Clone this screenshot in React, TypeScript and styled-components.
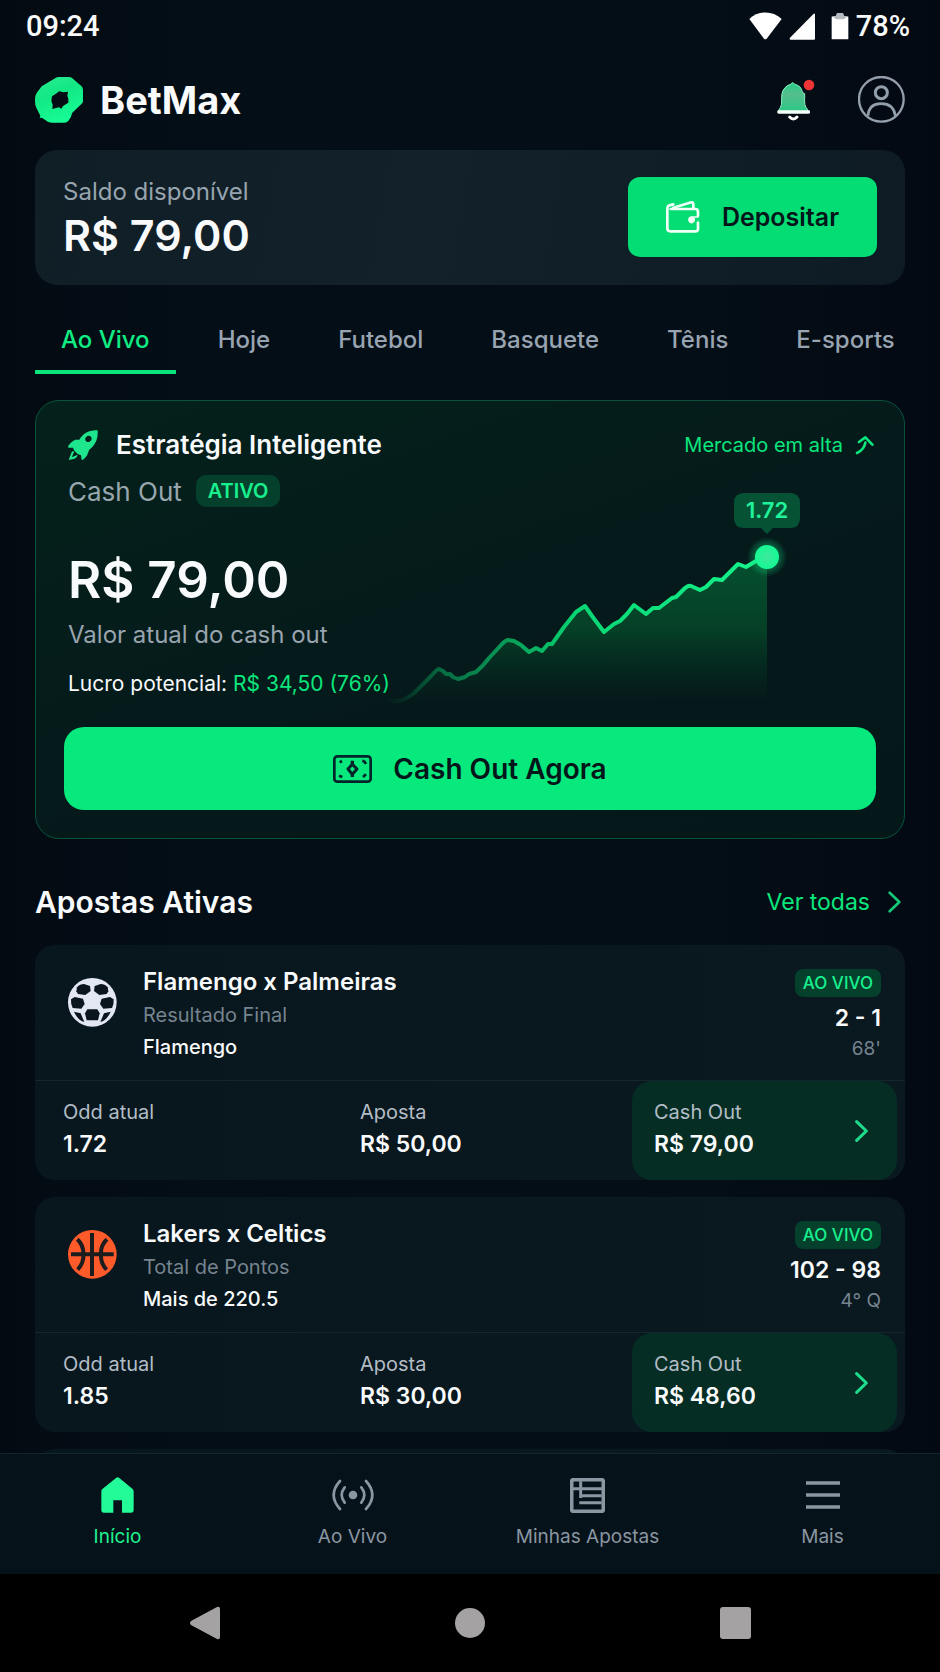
import React from 'react';
import styled, { createGlobalStyle } from 'styled-components';

const GlobalStyle = createGlobalStyle`
  *, *::before, *::after { box-sizing: border-box; }
  body {
    margin: 0;
    background: #000;
    font-family: Inter, "Liberation Sans", sans-serif;
    color: #f8fafb;
  }
  h1, h2, h3, p, dl, dd, dt, ul { margin: 0; padding: 0; font-weight: inherit; }
  button { font: inherit; color: inherit; border: 0; padding: 0; background: none; cursor: pointer; }
  a { color: inherit; text-decoration: none; }
  svg { display: block; flex: none; }
`;

const Shell = styled.div`
  display: flex;
  flex-direction: column;
  height: 100vh;
  background: linear-gradient(90deg, #030a12 0%, #040e16 20%, #040e16 75%, #030912 100%);
`;

const StatusBar = styled.div`
  display: flex;
  flex: none;
  align-items: center;
  justify-content: space-between;
  height: 52px;
  padding: 0 30px 0 26px;
  font-family: Roboto, sans-serif;
  font-size: 29px;
  font-weight: 500;
  line-height: 34px;
`;

const StatusIcons = styled.div`
  display: flex;
  align-items: center;
  gap: 15px;
`;

const StatusGroup = styled.div`
  display: flex;
  align-items: center;
  gap: 7px;
`;

const Scroller = styled.main`
  flex: 1;
  min-height: 0;
  overflow-y: auto;
  scrollbar-width: none;
  padding: 0 35px;
`;

const Header = styled.header`
  display: flex;
  align-items: center;
  justify-content: space-between;
  padding: 24px 0 27px;
`;

const Brand = styled.div`
  display: flex;
  align-items: center;
  gap: 17px;
  height: 46px;
`;

const BrandName = styled.h1`
  font-size: 38px;
  font-weight: 700;
  line-height: 46px;
`;

const HeaderActions = styled.div`
  display: flex;
  align-items: center;
  gap: 43px;
`;

const BalanceCard = styled.section`
  display: flex;
  align-items: center;
  justify-content: space-between;
  padding: 27px 28px 28px;
  border-radius: 22px;
  background: linear-gradient(100deg, #101e26, #12212a 45%, #0e1b24);
`;

const BalanceText = styled.div`
  display: flex;
  flex-direction: column;
  gap: 6px;
`;

const Muted = styled.p`
  font-size: 24px;
  line-height: 30px;
  color: #98a4ae;
`;

const BalanceValue = styled.p`
  font-size: 43px;
  font-weight: 600;
  line-height: 44px;
`;

const DepositButton = styled.button`
  display: flex;
  align-items: center;
  justify-content: center;
  gap: 22px;
  width: 249px;
  height: 80px;
  border-radius: 12px;
  background: #04dd73;
  color: #03161a;
  font-size: 25px;
  font-weight: 600;
`;

const Tabs = styled.nav`
  display: flex;
  gap: 16px;
  margin: 40px -35px 26px 0;
  overflow: hidden;
`;

const Tab = styled.button<{ $active?: boolean }>`
  padding: 0 26px 15px;
  border-bottom: 4px solid ${p => (p.$active ? '#0be47b' : 'transparent')};
  color: ${p => (p.$active ? '#10ec84' : '#98a4b1')};
  font-size: 24px;
  font-weight: 500;
  line-height: 30px;
  white-space: nowrap;
`;

const StrategyCard = styled.section`
  padding: 27px 28px 28px;
  border: 1px solid #08543a;
  border-radius: 24px;
  background: linear-gradient(160deg, #04211b 0%, #05191b 60%, #041819 100%);
`;

const StrategyHead = styled.div`
  display: flex;
  align-items: center;
  justify-content: space-between;
  padding: 0 2px 0 4px;
`;

const StrategyTitle = styled.div`
  display: flex;
  align-items: center;
  gap: 17px;
`;

const TitleText = styled.h2`
  font-size: 26px;
  font-weight: 600;
  line-height: 34px;
`;

const Trend = styled.div`
  display: flex;
  align-items: center;
  gap: 12px;
  color: #0be67d;
  font-size: 20px;
  line-height: 28px;
`;

const StrategyBody = styled.div`
  display: flex;
  padding: 8px 0 17px 4px;
`;

const StrategyInfo = styled.div`
  flex: none;
  width: 317px;
  white-space: nowrap;
`;

const CashOutLine = styled.div`
  display: flex;
  align-items: center;
  gap: 14px;
  height: 42px;
  color: #98a6ad;
  font-size: 26px;
`;

const Badge = styled.span<{ $small?: boolean }>`
  padding: ${p => (p.$small ? '0 8px' : '0 12px')};
  border-radius: ${p => (p.$small ? '8px' : '10px')};
  background: #05402d;
  color: #18f08d;
  font-size: ${p => (p.$small ? '17px' : '20px')};
  font-weight: ${p => (p.$small ? 500 : 600)};
  line-height: ${p => (p.$small ? '28px' : '32px')};
`;

const CashOutValue = styled.p`
  margin: 36px 0 8px;
  font-size: 51px;
  font-weight: 600;
  line-height: 64px;
`;

const Profit = styled.p`
  margin-top: 20px;
  font-size: 21px;
  line-height: 28px;
`;

const ProfitValue = styled.span`
  color: #0be67d;
`;

const Chart = styled.svg`
  flex: 1;
  min-width: 0;
  height: 240px;
`;

const CashOutButton = styled.button`
  display: flex;
  align-items: center;
  justify-content: center;
  gap: 21px;
  width: 100%;
  height: 83px;
  border-radius: 20px;
  background: #07e97c;
  color: #03161a;
  font-size: 28px;
  font-weight: 600;
`;

const SectionHead = styled.div`
  display: flex;
  align-items: center;
  justify-content: space-between;
  margin: 44px 0 24px;
`;

const SectionTitle = styled.h2`
  font-size: 30px;
  font-weight: 600;
  line-height: 38px;
`;

const SeeAll = styled.a`
  display: flex;
  align-items: center;
  gap: 18px;
  padding-right: 3px;
  color: #0be67d;
  font-size: 23px;
  line-height: 38px;
`;

const BetList = styled.ul`
  display: flex;
  flex-direction: column;
  gap: 17px;
  list-style: none;
`;

const BetCard = styled.li`
  overflow: hidden;
  border-radius: 20px;
  background: linear-gradient(90deg, #08161d, #0a1820);
`;

const NextCard = styled(BetCard)`
  height: 40px;
`;

const BetTop = styled.div`
  display: flex;
  padding: 20px 24px 17px 33px;
  border-bottom: 1px solid #16262e;
`;

const BallSlot = styled.div`
  padding: 13px 26px 0 0;
`;

const BetNames = styled.div`
  flex: 1;
`;

const BetTitle = styled.h3`
  font-size: 24px;
  font-weight: 600;
  line-height: 34px;
`;

const BetLine = styled.p<{ $dim?: boolean }>`
  color: ${p => (p.$dim ? '#76848f' : '#f8fafb')};
  font-size: 20px;
  font-weight: ${p => (p.$dim ? 400 : 500)};
  line-height: 32px;
`;

const BetStatus = styled.div`
  display: flex;
  flex-direction: column;
  align-items: flex-end;
`;

const BadgeRow = styled.div`
  display: flex;
  align-items: center;
  height: 36px;
`;

const Score = styled.p`
  font-size: 23px;
  font-weight: 600;
  line-height: 34px;
`;

const Clock = styled.p`
  color: #76848f;
  font-size: 19px;
  line-height: 28px;
`;

const BetBottom = styled.div`
  display: grid;
  grid-template-columns: 297fr 272fr 265fr;
  padding: 0 8px 0 28px;
`;

const Stat = styled.dl`
  padding: 15px 0 20px;
`;

const StatLabel = styled.dt`
  color: #b3bdc6;
  font-size: 20px;
  line-height: 32px;
`;

const StatValue = styled.dd`
  font-size: 23px;
  font-weight: 600;
  line-height: 32px;
`;

const BetCashOut = styled.button`
  display: flex;
  align-items: center;
  justify-content: space-between;
  padding: 0 28px 0 22px;
  border-radius: 20px;
  background: #052d24;
  text-align: left;
`;

const BottomNav = styled.nav`
  display: grid;
  flex: none;
  grid-template-columns: repeat(4, 1fr);
  padding: 20px 0 23px;
  border-top: 1px solid #13262e;
  background: #06121a;
`;

const NavItem = styled.a<{ $active?: boolean }>`
  display: flex;
  flex-direction: column;
  align-items: center;
  gap: 7px;
  color: ${p => (p.$active ? '#1ef491' : '#8a96a2')};
  font-size: 19px;
  line-height: 28px;
`;

const NavIcon = styled.span`
  display: flex;
  align-items: center;
  height: 42px;
`;

const SystemBar = styled.div`
  display: grid;
  flex: none;
  grid-template-columns: repeat(3, 1fr);
  align-items: center;
  justify-items: center;
  height: 98px;
  padding: 0 72px;
  background: #000;
`;

const SystemButton = styled.button`
  display: flex;
`;

const WifiIcon = () => (
  <svg width="33" height="28" viewBox="0 0 99 84" fill="#fff">
    <path d="M1 21C28-5 71-5 98 21L53 80Q49 84 45 80Z" />
  </svg>
);

const SignalIcon = () => (
  <svg width="27" height="27" viewBox="0 0 81 81" fill="#fff">
    <path d="M74 2Q78 0 78 5V77Q78 80 75 80H4Q0 79 3 74Z" />
  </svg>
);

const BatteryIcon = () => (
  <svg width="18" height="28" viewBox="0 0 54 84">
    <path d="M2 14H52V80Q52 82 50 82H4Q2 82 2 80Z" fill="#fff" />
    <path d="M2 12H14L18 3H36L40 12H52L38 22H16Z" fill="#b4bac0" />
  </svg>
);

const Logo = () => (
  <svg width="48" height="46" viewBox="0 0 144 138">
    <defs>
      <linearGradient id="logo" x1="0" y1="0" x2="0.4" y2="1">
        <stop offset="0" stopColor="#2bee93" />
        <stop offset="0.45" stopColor="#12e884" />
        <stop offset="1" stopColor="#17fb94" />
      </linearGradient>
    </defs>
    <path
      fill="url(#logo)"
      fillRule="evenodd"
      d="M63 2Q66 0 70 0H102Q107 0 111 3L139 27Q144 32 144 38V72Q144 77 140 80L112 107Q110 112 108 119L100 132Q95 137 88 137H50Q42 137 36 133L22 123L14 122L16 116L4 92Q0 84 0 74V66Q0 56 5 48L20 28ZM65 49L72 43L86 46L99 44L97 56L100 66V77L84 87L79 95L72 91L52 96L53 83L49 72L51 58Z"
    />
  </svg>
);

const BellIcon = () => (
  <svg width="38" height="42" viewBox="0 0 114 126">
    <defs>
      <linearGradient id="bell" x1="0" y1="0" x2="0" y2="1">
        <stop offset="0" stopColor="#25cf86" />
        <stop offset="0.4" stopColor="#55bd8d" />
        <stop offset="1" stopColor="#2ec786" />
      </linearGradient>
    </defs>
    <path
      d="M41 16Q47 6 53 16C66 19 74 26 76 40L83 44C84 58 80 74 87 85L95 97H3L10 86C17 74 12 58 15 44C18 30 27 20 41 16Z"
      fill="url(#bell)"
      stroke="#8df3c6"
      strokeWidth="3"
    />
    <rect x="1" y="94" width="98" height="10" rx="4" fill="#f4fffa" />
    <path d="M38 114Q49 126 60 114" fill="none" stroke="#fff" strokeWidth="9" strokeLinecap="round" />
    <circle cx="96" cy="18" r="16" fill="#ee3436" />
  </svg>
);

const UserIcon = () => (
  <svg width="47" height="47" viewBox="0 0 141 141" fill="none" stroke="#949fac">
    <circle cx="70" cy="70" r="67" strokeWidth="7" />
    <circle cx="70" cy="50" r="18" strokeWidth="9" />
    <path d="M30 119C32 94 48 83 70 83S108 94 112 119" strokeWidth="8" />
  </svg>
);

const WalletIcon = () => (
  <svg width="34" height="32" viewBox="0 0 102 96" fill="none" stroke="#f2fff8" strokeWidth="8" strokeLinejoin="round" strokeLinecap="round">
    <path d="M22 20L76 4Q82 3 82 12V22" />
    <path d="M22 10L10 13Q4 15 4 24V82Q4 91 13 91H88Q96 91 96 83V65M96 45V33Q96 24 88 24H14" />
    <path d="M96 48H76Q68 49 69 57T78 65L84 54" strokeWidth="5" />
    <circle cx="78" cy="56" r="9" fill="#f2fff8" stroke="none" />
  </svg>
);

const RocketIcon = () => (
  <svg width="31" height="31" viewBox="0 0 93 93" fill="#1ee68d">
    <path
      fillRule="evenodd"
      d="M89 1C90 24 86 42 63 60C60 72 56 82 44 90Q40 91 40 84L39 76L29 72L18 61L15 53L1 53Q0 49 2 46C8 38 14 32 22 29H34C46 8 65 1 89 1ZM70 22A10 9 -30 1 0 70 30A9 9 0 0 0 70 22Z"
    />
    <path d="M12 64L2 90L20 86Q28 82 29 74L20 78L12 82L16 70L20 65Z" />
  </svg>
);

const TrendIcon = () => (
  <svg width="19" height="20" viewBox="0 0 57 60" fill="none" stroke="#0be67d" strokeWidth="8" strokeLinecap="round" strokeLinejoin="round">
    <path d="M12 21L31 7L52 29" />
    <path d="M6 54Q28 44 31 23" />
  </svg>
);

const CashIcon = () => (
  <svg width="39" height="28" viewBox="0 0 117 84" fill="none" stroke="#03242a">
    <rect x="4" y="4" width="109" height="76" rx="9" strokeWidth="8" />
    <path d="M58 28L72 42L58 58L45 42Z" strokeWidth="9" strokeLinejoin="round" />
    <path d="M58 17V28M58 58V66" strokeWidth="10" />
    <path d="M20 22L27 18M88 17Q96 19 99 27M18 62L28 66M90 66L99 58" strokeWidth="8" />
  </svg>
);

const ChevronIcon = ({ color, weight }: { color: string; weight: number }) => (
  <svg width="14" height="24" viewBox="0 0 42 72" fill="none" stroke={color} strokeWidth={weight} strokeLinecap="round" strokeLinejoin="round">
    <path d="M5 8L34 36L5 64" />
  </svg>
);

const SoccerIcon = () => (
  <svg width="49" height="49" viewBox="0 0 147 147">
    <circle cx="73" cy="73" r="73" fill="#e3e7f4" />
    <g fill="#0a151d">
      <path d="M27 28Q36 18 48 18L66 24L68 39L52 51L30 48L25 40Z" />
      <path d="M119 28Q110 18 98 18L80 24L78 39L94 51L116 48L121 40Z" />
      <path d="M9 64L20 57L45 62L50 78L40 92L14 90Q8 80 9 64Z" />
      <path d="M137 64L126 57L101 62L96 78L106 92L132 90Q138 80 137 64Z" />
      <path d="M58 94H88L95 106L90 127H56L51 106Z" />
      <path d="M18 101L38 106L49 132Q30 128 18 101Z" />
      <path d="M128 101L108 106L97 132Q116 128 128 101Z" />
    </g>
  </svg>
);

const BasketIcon = () => (
  <svg width="49" height="49" viewBox="0 0 147 147" fill="none" stroke="#1b1d1f" strokeWidth="12">
    <circle cx="73" cy="73" r="73" fill="#ff5a2a" stroke="none" />
    <path d="M72 9V138M9 73H137" />
    <path d="M28 28C51 49 54 93 29 119" />
    <path d="M117 28C92 50 93 96 116 119" />
  </svg>
);

const HomeIcon = () => (
  <svg width="33" height="36" viewBox="0 0 99 108" fill="#22fb97">
    <path d="M46 2Q50-1 54 2L94 35Q98 38 98 43V99Q98 107 90 107H63V70H37V107H9Q1 107 1 99V43Q1 38 5 35Z" />
  </svg>
);

const LiveIcon = () => (
  <svg width="42" height="32" viewBox="0 0 126 96" fill="none" stroke="#8a96a2" strokeWidth="8" strokeLinecap="round">
    <circle cx="63" cy="48" r="13" fill="#8a96a2" stroke="none" />
    <path d="M24 6Q-14 48 24 90M38 25Q20 48 38 71" />
    <path d="M102 6Q140 48 102 90M88 25Q106 48 88 71" />
  </svg>
);

const TicketIcon = () => (
  <svg width="35" height="35" viewBox="0 0 105 105" fill="none" stroke="#8a96a2">
    <rect x="5" y="5" width="95" height="95" rx="6" strokeWidth="11" />
    <path d="M5 32H100M32 10V60M32 53H95M28 74H95" strokeWidth="9" />
  </svg>
);

const MenuIcon = () => (
  <svg width="34" height="28" viewBox="0 0 102 84" stroke="#8a96a2" strokeWidth="10">
    <path d="M0 6H102M0 42H102M0 78H102" />
  </svg>
);

const linePath =
  'M1 231H14Q20 230 29 223L46 206Q52 199 54 199L58 201L61 204H65L68 207L73 209L80 207L84 204L91 202Q98 196 104 188L117 174Q121 170 123 170L129 171L136 175L144 182L151 178L157 181L163 174L167 174L179 157L191 142L200 136L207 146L219 162L229 154L235 151L242 144L249 135L261 144L268 138L274 138L287 128L291 127L299 119Q303 115 306 116L315 120L321 117L329 109L337 110L344 103L353 94L361 97L371 91L382 87';

const OddsChart = () => (
  <Chart viewBox="0 0 490 240" preserveAspectRatio="xMinYMid meet" role="img" aria-label="Odd 1.72">
    <defs>
      <linearGradient id="line" x1="0" y1="0" x2="1" y2="0">
        <stop offset="0" stopColor="#0aa25c" stopOpacity="0" />
        <stop offset="0.05" stopColor="#0aa25c" stopOpacity="0.15" />
        <stop offset="0.15" stopColor="#0aa25c" stopOpacity="0.6" />
        <stop offset="0.5" stopColor="#07d673" />
        <stop offset="1" stopColor="#16f58d" />
      </linearGradient>
      <linearGradient id="area" x1="0" y1="0" x2="0" y2="1">
        <stop offset="0" stopColor="#05502f" />
        <stop offset="0.5" stopColor="#054027" />
        <stop offset="1" stopColor="#05301f" stopOpacity="0" />
      </linearGradient>
      <radialGradient id="glow">
        <stop offset="0.5" stopColor="#0fe883" stopOpacity="0.4" />
        <stop offset="1" stopColor="#0fe883" stopOpacity="0" />
      </radialGradient>
      <radialGradient id="dot">
        <stop offset="0" stopColor="#3fe79d" />
        <stop offset="1" stopColor="#14fa93" />
      </radialGradient>
    </defs>
    <path d={`${linePath}V232H1Z`} fill="url(#area)" />
    <path d={linePath} fill="none" stroke="url(#line)" strokeWidth="4" strokeLinejoin="round" strokeLinecap="round" />
    <circle cx="382" cy="87" r="20" fill="url(#glow)" />
    <circle cx="382" cy="87" r="12" fill="url(#dot)" />
    <path d="M359 23H405Q415 23 415 33V48Q415 58 405 58H388L382 64L376 58H359Q349 58 349 48V33Q349 23 359 23Z" fill="#055235" />
    <text x="382" y="48" textAnchor="middle" fontSize="22" fontWeight="600" fill="#20f39a">
      1.72
    </text>
  </Chart>
);

type Bet = {
  icon: React.ReactNode;
  title: string;
  market: string;
  pick: string;
  score: string;
  clock: string;
  odd: string;
  stake: string;
  cashOut: string;
};

const bets: Bet[] = [
  {
    icon: <SoccerIcon />,
    title: 'Flamengo x Palmeiras',
    market: 'Resultado Final',
    pick: 'Flamengo',
    score: '2 - 1',
    clock: "68'",
    odd: '1.72',
    stake: 'R$ 50,00',
    cashOut: 'R$ 79,00',
  },
  {
    icon: <BasketIcon />,
    title: 'Lakers x Celtics',
    market: 'Total de Pontos',
    pick: 'Mais de 220.5',
    score: '102 - 98',
    clock: '4° Q',
    odd: '1.85',
    stake: 'R$ 30,00',
    cashOut: 'R$ 48,60',
  },
];

const tabs = ['Ao Vivo', 'Hoje', 'Futebol', 'Basquete', 'Tênis', 'E-sports'];

const navItems = [
  { label: 'Início', icon: <HomeIcon /> },
  { label: 'Ao Vivo', icon: <LiveIcon /> },
  { label: 'Minhas Apostas', icon: <TicketIcon /> },
  { label: 'Mais', icon: <MenuIcon /> },
];

const BetItem = ({ bet }: { bet: Bet }) => (
  <BetCard>
    <BetTop>
      <BallSlot>{bet.icon}</BallSlot>
      <BetNames>
        <BetTitle>{bet.title}</BetTitle>
        <BetLine $dim>{bet.market}</BetLine>
        <BetLine>{bet.pick}</BetLine>
      </BetNames>
      <BetStatus>
        <BadgeRow>
          <Badge $small>AO VIVO</Badge>
        </BadgeRow>
        <Score>{bet.score}</Score>
        <Clock>{bet.clock}</Clock>
      </BetStatus>
    </BetTop>
    <BetBottom>
      <Stat>
        <StatLabel>Odd atual</StatLabel>
        <StatValue>{bet.odd}</StatValue>
      </Stat>
      <Stat>
        <StatLabel>Aposta</StatLabel>
        <StatValue>{bet.stake}</StatValue>
      </Stat>
      <BetCashOut type="button">
        <Stat as="span">
          <StatLabel as="div">Cash Out</StatLabel>
          <StatValue as="div">{bet.cashOut}</StatValue>
        </Stat>
        <ChevronIcon color="#1fdc8c" weight={9} />
      </BetCashOut>
    </BetBottom>
  </BetCard>
);

export default function App() {
  const [tab, setTab] = React.useState('Ao Vivo');
  return (
    <Shell>
      <GlobalStyle />
      <StatusBar>
        <span>09:24</span>
        <StatusIcons>
          <StatusGroup>
            <WifiIcon />
            <SignalIcon />
          </StatusGroup>
          <StatusGroup>
            <BatteryIcon />
            <span>78%</span>
          </StatusGroup>
        </StatusIcons>
      </StatusBar>
      <Scroller>
        <Header>
          <Brand>
            <Logo />
            <BrandName>BetMax</BrandName>
          </Brand>
          <HeaderActions>
            <button type="button" aria-label="Notificações">
              <BellIcon />
            </button>
            <button type="button" aria-label="Perfil">
              <UserIcon />
            </button>
          </HeaderActions>
        </Header>
        <BalanceCard>
          <BalanceText>
            <Muted>Saldo disponível</Muted>
            <BalanceValue>R$ 79,00</BalanceValue>
          </BalanceText>
          <DepositButton type="button">
            <WalletIcon />
            Depositar
          </DepositButton>
        </BalanceCard>
        <Tabs>
          {tabs.map(name => (
            <Tab key={name} type="button" $active={name === tab} onClick={() => setTab(name)}>
              {name}
            </Tab>
          ))}
        </Tabs>
        <StrategyCard>
          <StrategyHead>
            <StrategyTitle>
              <RocketIcon />
              <TitleText>Estratégia Inteligente</TitleText>
            </StrategyTitle>
            <Trend>
              Mercado em alta
              <TrendIcon />
            </Trend>
          </StrategyHead>
          <StrategyBody>
            <StrategyInfo>
              <CashOutLine>
                Cash Out <Badge>ATIVO</Badge>
              </CashOutLine>
              <CashOutValue>R$ 79,00</CashOutValue>
              <Muted>Valor atual do cash out</Muted>
              <Profit>
                Lucro potencial: <ProfitValue>R$ 34,50 (76%)</ProfitValue>
              </Profit>
            </StrategyInfo>
            <OddsChart />
          </StrategyBody>
          <CashOutButton type="button">
            <CashIcon />
            Cash Out Agora
          </CashOutButton>
        </StrategyCard>
        <SectionHead>
          <SectionTitle>Apostas Ativas</SectionTitle>
          <SeeAll href="#apostas">
            Ver todas
            <ChevronIcon color="#14c878" weight={8} />
          </SeeAll>
        </SectionHead>
        <BetList id="apostas">
          {bets.map(bet => (
            <BetItem key={bet.title} bet={bet} />
          ))}
          <NextCard />
        </BetList>
      </Scroller>
      <BottomNav>
        {navItems.map((item, i) => (
          <NavItem key={item.label} href="#" $active={i === 0}>
            <NavIcon>{item.icon}</NavIcon>
            {item.label}
          </NavItem>
        ))}
      </BottomNav>
      <SystemBar>
        <SystemButton type="button" aria-label="Voltar">
          <svg width="30" height="34" viewBox="0 0 30 34" fill="#a5a2a3">
            <path d="M1 15L27 1Q30 0 30 3V31Q30 34 27 33L1 19Q-1 17 1 15Z" />
          </svg>
        </SystemButton>
        <SystemButton type="button" aria-label="Tela inicial">
          <svg width="30" height="30" viewBox="0 0 30 30" fill="#a5a2a3">
            <circle cx="15" cy="15" r="15" />
          </svg>
        </SystemButton>
        <SystemButton type="button" aria-label="Recentes">
          <svg width="31" height="32" viewBox="0 0 31 32" fill="#a5a2a3">
            <rect width="31" height="32" rx="3" />
          </svg>
        </SystemButton>
      </SystemBar>
    </Shell>
  );
}
